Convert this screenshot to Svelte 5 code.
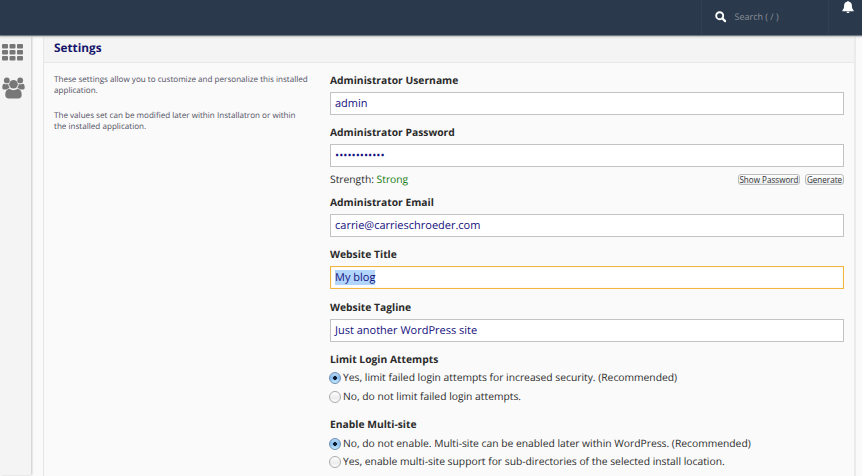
<script>
  const before = [
    { label: 'Administrator Username', value: 'admin' },
    { label: 'Administrator Password', value: '•'.repeat(12), password: true },
    { label: 'Administrator Email', value: 'carrie@carrieschroeder.com' },
    { label: 'Website Title', value: 'My blog', active: true },
    { label: 'Website Tagline', value: 'Just another WordPress site' }
  ];
  const groups = [
    {
      label: 'Limit Login Attempts',
      options: [
        { text: 'Yes, limit failed login attempts for increased security. (Recommended)', on: true },
        { text: 'No, do not limit failed login attempts.' }
      ]
    },
    {
      label: 'Enable Multi-site',
      options: [
        { text: 'No, do not enable. Multi-site can be enabled later within WordPress. (Recommended)', on: true },
        { text: 'Yes, enable multi-site support for sub-directories of the selected install location.' }
      ]
    }
  ];
</script>

<div class="app">
  <header>
    <div class="search">
      <svg width="12" height="12" viewBox="0 0 12 12"><circle cx="4.7" cy="4.7" r="3.5" fill="none" stroke="#fff" stroke-width="1.9" /><path d="M7.4 7.4 10.1 10.1" stroke="#fff" stroke-width="2.2" stroke-linecap="round" /></svg>
      <span>Search ( / )</span>
    </div>
    <div class="alerts">
      <svg width="12" height="14" viewBox="0 0 12 14" fill="#fff"><path d="M6 .9c.6 0 .9.300.9.8C9 2.200 9.900 3.600 9.900 5.500c0 2.700.6 3.800 1.800 4.900v.9H.3v-.9C1.500 9.300 2.100 8.200 2.100 5.500 2.100 3.600 3 2.200 5.100 1.700c0-.5.300-.8.900-.8zM4.500 11.700h3c0 .8-.7 1.300-1.500 1.300s-1.500-.5-1.500-1.300z" /></svg>
    </div>
  </header>
  <div class="body">
    <nav>
      <svg class="grid" width="21" height="17" viewBox="0 0 21 17" fill="#777">
        {#each [0, 6, 12] as y}
          {#each [0, 7.5, 15] as x}
            <rect {x} {y} width="6" height="4.500" rx="1" />
          {/each}
        {/each}
      </svg>
      <svg width="23" height="22" viewBox="0 0 23 22" fill="#777">
        <circle cx="4.800" cy="3.400" r="2.900" /><circle cx="18.200" cy="3.400" r="2.900" />
        <path d="M2.300 6.700C3.600 7.500 5.500 7.500 6.400 6.900c0 2 .6 3.300 1.600 4.400-1.600 0-2.500.4-3.300 1.200H2.500C1 12.500.3 11.700.3 10.400.3 8.300 1 6.700 2.300 6.700zM20.700 6.700c-1.300.8-3.200.8-4.100.2 0 2-.6 3.300-1.600 4.400 1.600 0 2.500.4 3.300 1.200h2.200c1.500 0 2.200-.8 2.200-2.100 0-2.100-.7-3.700-2-3.700z" />
        <circle cx="11.500" cy="7.300" r="4.300" />
        <path d="M7.600 12.100c2.300 1.500 5.500 1.500 7.800 0 3 0 4.300 2.600 4.300 5.900 0 2.300-1.300 3.500-3.400 3.500H6.700c-2.100 0-3.400-1.200-3.400-3.500 0-3.300 1.300-5.900 4.300-5.900z" />
      </svg>
    </nav>
    <main>
      <h2><span>Settings</span></h2>
      <div class="content">
        <aside>
          <p>These settings allow you to customize and personalize this installed<br />application.</p>
          <p>The values set can be modified later within Installatron or within<br />the installed application.</p>
        </aside>
        <form>
          {#each before as f}
            <section class="field">
              <div class="label">{f.label}</div>
              <div class="input" class:active={f.active}><span>{f.value}</span></div>
            </section>
            {#if f.password}
              <div class="strength">
                <span>Strength: <b>Strong</b></span>
                <button type="button" class="show">Show Password</button>
                <button type="button" class="gen">Generate</button>
              </div>
            {/if}
          {/each}
          {#each groups as g}
            <section class="group">
              <div class="label">{g.label}</div>
              {#each g.options as o}
                <div class="option"><i class:on={o.on}></i><span>{o.text}</span></div>
              {/each}
            </section>
          {/each}
        </form>
      </div>
    </main>
  </div>
</div>

<style>
  :global(body) { overflow: hidden; }
  .app {
    width: 862px; height: 476px; overflow: hidden; background: #fafafa;
    font-family: "Open Sans", "Noto Sans", sans-serif; font-size: 11px; color: #2c2c2c;
    display: flex; flex-direction: column; box-sizing: border-box; text-rendering: geometricPrecision;
  }
  header {
    height: 35px; flex: none; background: #2a3a4c; display: flex; justify-content: flex-end;
    box-shadow: 0 1px 1px #6c7782, 0 2px 2px #ccc; z-index: 1;
  }
  .search {
    width: 128px; box-sizing: border-box; border-left: 1px solid #314154; border-right: 1px solid #314154;
    display: flex; align-items: center; padding: 0 0 2px 13px; font-size: 9px; color: #8b8f95;
  }
  .search span { margin-left: 7.500px; }
  .alerts { width: 33px; display: flex; padding-left: 13px; box-sizing: border-box; }
  .alerts svg { flex: none; }
  .body { flex: 1; display: flex; min-height: 0; }
  nav {
    width: 31px; height: 440px; flex: none; background: #f4f4f4; box-shadow: 1px 0 2px #c8c8c8;
    display: flex; flex-direction: column; padding: 9px 0 0 2px; box-sizing: border-box;
  }
  nav svg { flex: none; }
  .grid { margin-bottom: 16px; }
  main { width: 813px; box-sizing: border-box; margin-left: 12px; border-left: 1px solid #e6e6e6; border-right: 2px solid #ebebeb; }
  h2 {
    height: 28px; box-sizing: border-box; margin: 0; padding: 0 0 0 10px; background: #f4f4f4;
    border-bottom: 1px solid #e8e8e8; font-size: 11.800px; line-height: 26px; color: #17146b;
  }
  .content { display: flex; }
  aside { width: 276px; padding: 11px 0 0 10px; box-sizing: border-box; font-size: 8.100px; line-height: 11px; color: #505062; }
  p { margin: 0 0 14px; white-space: nowrap; }
  form { width: 514px; padding-top: 5.300px; margin-left: 10px; }
  .label { height: 24px; line-height: 26.400px; font-weight: 700; font-size: 10.300px; color: #2b2b2b; }
  .field { height: 52.150px; }
  .input {
    height: 23px; box-sizing: border-box; border: 1px solid #c3c3c3; background: #fff;
    padding-left: 4px; line-height: 22px; color: #14107c; font-size: 11px;
  }
  .active { border-color: #f2b53f; box-shadow: inset 0 0 1px #f7ce7e; }
  .active span { background: #b2d5fc; }
  .strength { height: 17.750px; display: flex; align-items: flex-start; font-size: 10.300px; }
  .strength span { flex: 1; line-height: 14px; }
  b { color: #107a10; font-weight: 400; }
  button {
    height: 11px; box-sizing: border-box; border: 1px solid #bbb; border-radius: 3px; padding: 0;
    background: linear-gradient(#fff, #e8ebed); font: 8.100px/9px "Open Sans", sans-serif; color: #333; margin-top: 1px; white-space: nowrap;
  }
  .show { width: 62px; margin-right: 5px; }
  .gen { width: 39px; }
  .group { height: 65.300px; }
  .group .label { height: 22.500px; line-height: 26.400px; }
  .option { height: 18.300px; display: flex; align-items: center; font-size: 10.300px; white-space: nowrap; }
  i {
    width: 12px; height: 12px; box-sizing: border-box; border: 1px solid #aaa; border-radius: 50%;
    background: linear-gradient(#fff, #ececec 60%, #fff); margin: 0 2px 0 -1px; flex: none;
  }
  .on { background: radial-gradient(circle, #101c30 0 1.600px, transparent 2.200px), linear-gradient(#b9d9f5, #84bdf0 50%, #c7eaff); border-color: #6f8fb3; }
</style>
